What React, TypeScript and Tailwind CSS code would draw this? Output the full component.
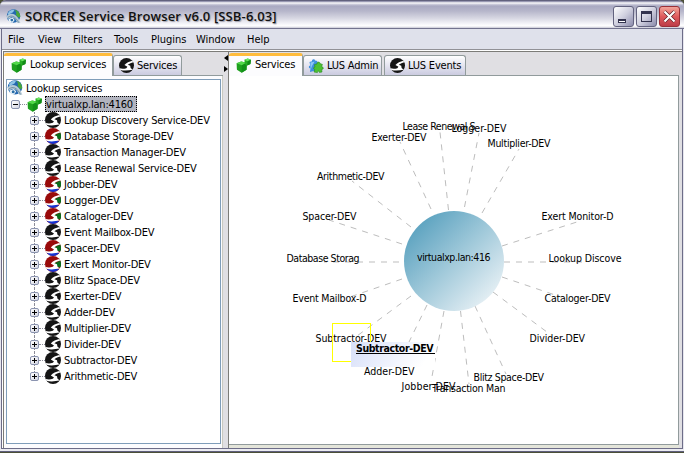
import React from "react";

const FONT = "font-['DejaVu_Sans_Condensed','Noto_Sans',sans-serif]";

function Swirl({ color = false, className = "size-4" }: { color?: boolean; className?: string }) {
  return (
    <svg viewBox="0 0 16 16" className={`shrink-0 ${className}`}>
      <circle cx="8" cy="8" r="8" fill={color ? "#990a0a" : "#151515"} />
      {color && <path d="M9 7.4L15.2 4.4A8 8 0 0 1 15.2 11.6L12.6 11Z" fill="#0a6b1c" />}
      {color && <path d="M1.8 13A8 8 0 0 0 14.2 13L8 12Z" fill="#1432d2" />}
      <path d="M14.2 3C11 3.8 8 5 5.8 7.4L9 9.4L7.8 10.8C5.5 11.6 3 11.6 .6 11L1.5 12.8C5 13.8 10.4 13.4 14.6 12.6L12.4 10.6L12 8.2L9.4 7.2C11.2 5.8 13 5 15.2 4.4Z" fill="#fff" />
    </svg>
  );
}

function Cubes({ className = "size-4" }: { className?: string }) {
  return (
    <svg viewBox="0 0 16 16" className={`shrink-0 ${className}`}>
      <path d="M.6 5.6L5.5 3.6L11.6 5L11.2 12.5L6 15.6L1 12.4Z" fill="#1fa01f" />
      <path d="M.6 5.6L5.5 3.6L11.6 5L6.2 7.6Z" fill="#52d84a" />
      <path d="M6.2 7.6L11.6 5L11.2 12.5L6 15.6Z" fill="#129018" />
      <path d="M9 1.9L12.5 .6L16 1.8L15.4 6.4L12 8L9.4 6.4Z" fill="#26ad24" />
      <path d="M9 1.9L12.5 .6L16 1.8L12.3 3.4Z" fill="#6be460" />
      <path d="M12.3 3.4L16 1.8L15.4 6.4L12 8Z" fill="#128a18" />
    </svg>
  );
}

function Globe({ className = "size-4" }: { className?: string }) {
  return (
    <svg viewBox="0 0 16 16" className={`shrink-0 ${className}`}>
      <circle cx="8" cy="7.4" r="7.2" fill="#2468b0" />
      <path d="M2 4.5C4 1 7 .6 9 1L7.5 3.4L4.5 5L3 7.4Z" fill="#8fc4e6" />
      <path d="M9.5 .8C13 1.6 15.4 5 15.2 8.6L12.8 9L10.6 6L11 3.6Z" fill="#49a63c" />
      <path d="M.4 7.6C4 3.8 9 3.8 13 9.6L15.4 14.8H12C10.5 9.8 7.5 7.6 4.5 9.2L2 10.6Z" fill="#b7cad6" />
      <path d="M2 9C6 6 10 7.6 13.4 14.4" fill="none" stroke="#5b7f95" strokeWidth=".8" />
      <path d="M2.6 10.6L7 9L9.2 11.6L7 14.6L3.4 13.6Z" fill="#edf5fa" />
      <circle cx="6.2" cy="11.8" r="1.5" fill="#2b6ea6" />
    </svg>
  );
}

function Puzzle() {
  return (
    <svg viewBox="0 0 16 16" className="size-4 shrink-0">
      <path d="M1.5 4L4 3.2C3.6 1 6.8.4 7 2.6L9.4 3L9 12L6 13L2 14L2.4 10.6C.4 10.4 .4 8 2.2 7.6Z" fill="#3f8fde" />
      <path d="M2.4 4.4L4.8 4L6.6 3.6L4 8L2.6 12Z" fill="#8cc6f5" />
      <path d="M6.4 6.6L9 6C8.6 3.6 12 3.4 12 5.6L14.4 6.4L13.6 8.8C16 9 15.8 11.6 13.6 11.4L14 14L11.4 14.4C11 12.6 9.2 12.8 9.4 14.6L6 14L6.8 11.6C5 11 5.2 9 7 9Z" fill="#4cc032" stroke="#258a1c" strokeWidth=".6" />
    </svg>
  );
}

function Expander({ open = false }: { open?: boolean }) {
  return (
    <span className="relative z-10 flex size-[9px] shrink-0 items-center justify-center rounded-[2px] border border-[#8b94b0] bg-linear-to-br from-white to-[#d3d5e2]">
      <span className="h-px w-[5px] bg-black" />
      {!open && <span className="absolute h-[5px] w-px bg-black" />}
    </span>
  );
}

const services: [string, boolean][] = [
  ["Lookup Discovery Service-DEV", false],
  ["Database Storage-DEV", true],
  ["Transaction Manager-DEV", false],
  ["Lease Renewal Service-DEV", false],
  ["Jobber-DEV", true],
  ["Logger-DEV", true],
  ["Cataloger-DEV", true],
  ["Event Mailbox-DEV", false],
  ["Spacer-DEV", true],
  ["Exert Monitor-DEV", true],
  ["Blitz Space-DEV", false],
  ["Exerter-DEV", false],
  ["Adder-DEV", false],
  ["Multiplier-DEV", false],
  ["Divider-DEV", false],
  ["Subtractor-DEV", false],
  ["Arithmetic-DEV", false],
];

function Tree() {
  return (
    <div className="flex-1 border border-[#7f9db9] bg-white text-[11px] leading-4 tracking-[-0.2px]">
      <div className="flex h-4 items-center">
        <Globe />
        <span className="ml-[3px] pt-px">Lookup services</span>
      </div>
      <div className="flex h-4 items-center pl-1">
        <Expander open />
        <span className="w-[7px] border-t border-dotted border-[#8c8c98]" />
        <Cubes className="size-[15px]" />
        <span className="ml-[3px] h-4 w-[92px] whitespace-nowrap border border-dotted border-black bg-[#b2b4bf] leading-[15px]">virtualxp.lan:4160</span>
      </div>
      <ul className="ml-[28px]">
        {services.map(([name, color], i) => (
          <li key={name} className="relative -ml-[5px] flex h-4 items-center">
            <span className={`absolute left-[4px] top-0 w-px border-l border-dotted border-[#8c8c98] ${i === services.length - 1 ? "h-2" : "h-4"}`} />
            <Expander />
            <span className="w-[6px] border-t border-dotted border-[#8c8c98]" />
            <Swirl color={color} />
            <span className="ml-[3px] whitespace-nowrap pt-px">{name}</span>
          </li>
        ))}
      </ul>
    </div>
  );
}

function Tab({ icon, label, active = false, className }: { icon: React.ReactNode; label: string; active?: boolean; className: string }) {
  return active ? (
    <div className={`relative flex h-[23px] items-center gap-[4px] rounded-t-[3px] border-t-[3px] border-r border-[#919b9c] border-t-[#ffbc3c] bg-[#fcfcfe] pb-px tracking-[-0.2px] ${className}`}>
      {icon}
      <span className="whitespace-nowrap">{label}</span>
    </div>
  ) : (
    <div className={`flex h-5 items-center gap-[3px] rounded-t-[3px] border border-b-0 border-[#919b9c] bg-linear-to-b from-white to-[#cbcbe0] tracking-[-0.2px] ${className}`}>
      {icon}
      <span className="whitespace-nowrap pt-[2px]">{label}</span>
    </div>
  );
}

type Label = [string, number, number, number];
const labels: Label[] = [
  ["Lease Renewal S", 402.5, 130, 73],
  ["Logger-DEV", 451.5, 132, 55],
  ["Exerter-DEV", 371.5, 141, 55],
  ["Multiplier-DEV", 487.5, 147, 63],
  ["Arithmetic-DEV", 317, 180, 67.5],
  ["Spacer-DEV", 302.5, 220, 54],
  ["Exert Monitor-D", 541.5, 220, 72],
  ["Database Storag", 286.5, 262, 73],
  ["Lookup Discove", 548.5, 262, 73],
  ["Event Mailbox-D", 292.5, 302, 74],
  ["Cataloger-DEV", 544.5, 302, 66],
  ["Subtractor-DEV", 315.5, 342, 71],
  ["Divider-DEV", 529.5, 342, 55.5],
  ["Adder-DEV", 364, 375, 50.5],
  ["Jobber-DEV", 401.5, 390, 54],
  ["Blitz Space-DEV", 473.5, 381, 70.5],
  ["Transaction Man", 432, 392, 73.5],
];

const links = [
  [448.5, 210, 440, 132], [464.5, 207, 479, 133], [431, 209, 400, 142], [482, 213, 519, 149],
  [411, 227, 352, 181], [402, 244, 329, 220], [399, 262, 324, 262], [502, 246, 580, 221],
  [504, 262, 585, 262], [502, 277, 561, 297], [402, 279, 347, 298], [411, 296, 357, 336],
  [493, 292, 551, 335], [427, 305, 409, 342], [444, 311, 431, 382], [475, 306, 506, 374],
  [460.5, 311, 469, 384],
];

function Network() {
  return (
    <svg viewBox="229 76 449 368" className="h-[368px] w-[449px]" fontSize="10.5">
      <defs>
        <linearGradient id="hub" x1="0" y1="0" x2="1" y2="1">
          <stop offset=".1" stopColor="#57a0be" />
          <stop offset=".9" stopColor="#eaf2f6" />
        </linearGradient>
        <linearGradient id="tip" x1="0" y1="0" x2="1" y2="0.2">
          <stop offset="0" stopColor="#d8e0f9" />
          <stop offset="1" stopColor="#fff" />
        </linearGradient>
      </defs>
      <g stroke="#bdbdbd" strokeDasharray="6 6">
        {links.map(([x1, y1, x2, y2]) => (
          <line key={`${x2}-${y2}`} x1={x1} y1={y1} x2={x2} y2={y2} />
        ))}
      </g>
      <circle cx="454" cy="261" r="50" fill="url(#hub)" />
      <text x="417" y="261" textLength="73.5">virtualxp.lan:416</text>
      {labels.map(([text, x, y, w]) => (
        <text key={text} x={x} y={y} textLength={w}>{text}</text>
      ))}
      <rect x="332.5" y="323.5" width="38" height="38" fill="none" stroke="#ffff00" />
      <rect x="351" y="342" width="84" height="25" fill="url(#tip)" />
      <text x="356" y="352" textLength="77.5" fontWeight="bold">Subtractor-DEV</text>
      <rect x="356" y="353" width="79" height="1" />
    </svg>
  );
}

export default function App() {
  return (
    <div className={`flex h-[453px] w-[684px] flex-col overflow-hidden bg-[#4b5038] text-[11px] text-black ${FONT}`}>
      <div className="flex h-[452px] flex-col rounded-t-[6px] border-b border-[#5f5f7c] bg-[#e0dfe3]">
        <header className="flex h-[29px] shrink-0 items-center rounded-t-[6px] border-t border-b border-t-[#62627e] border-b-[#73738f] bg-[linear-gradient(#77779a_0px,#ffffff_2px,#d3d3e0_3px,#a9a9c2_5px,#b6b6ca_10px,#d6d6e2_17px,#f6f6fa_23px,#ffffff_25px,#c7c7d5_27px)] pl-[6px] pr-1">
          <Globe className="mt-1 size-[15px]" />
          <h1 className="ml-1 mt-[5px] flex-1 whitespace-nowrap font-['Open_Sans',sans-serif] text-[13px] font-semibold tracking-[0.13px] text-[#111] [text-shadow:1px_1px_1px_#a0a0ac]">SORCER Service Browser v6.0 [SSB-6.03]</h1>
          <div className="mt-1 flex gap-[2px]">
            <button className="flex size-[21px] items-end rounded-[3px] border border-[#63637f] bg-linear-to-br from-white via-[#d0d0df] to-[#8c8cac] pb-[3px] pl-1">
              <span className="h-[4px] w-2 border border-t-2 border-[#33334e] bg-white" />
            </button>
            <button className="flex size-[21px] items-center justify-center rounded-[3px] border border-[#63637f] bg-linear-to-br from-white via-[#d0d0df] to-[#8c8cac]">
              <span className="h-[11px] w-[11px] border border-t-[3px] border-[#33334e]" />
            </button>
            <button className="flex size-[21px] items-center justify-center rounded-[3px] border border-[#9a3038] bg-linear-to-b from-[#f0a39a] via-[#e05a5c] to-[#bd3c48]">
              <svg viewBox="0 0 13 13" className="size-[13px]">
                <path d="M1.5 1.5L11.5 11.5M11.5 1.5L1.5 11.5" stroke="#5a1c22" strokeWidth="3.4" />
                <path d="M1.5 1.5L11.5 11.5M11.5 1.5L1.5 11.5" stroke="#fff" strokeWidth="2.2" />
              </svg>
            </button>
          </div>
        </header>
        <div className="flex min-h-0 flex-1 flex-col border-x border-[#e6e6ee]">
          <div className="flex min-h-0 flex-1 flex-col border-x border-b border-[#6d6d88]">
            <nav className="flex h-[21px] shrink-0 items-center border-b border-[#919196] bg-[#dfe1eb] pl-[6px] pt-[2px]">
              <span className="w-[30px]">File</span>
              <span className="w-[35px]">View</span>
              <span className="w-[41px]">Filters</span>
              <span className="w-[37px]">Tools</span>
              <span className="w-[45px]">Plugins</span>
              <span className="w-[51px]">Window</span>
              <span>Help</span>
            </nav>
            <main className="flex min-h-0 flex-1 border-t border-l border-white">
              <section className="flex w-[220px] flex-col border-t border-l border-[#7c7c78] bg-[#e0dfe3] pt-px">
                <div className="flex h-[23px] shrink-0 items-end border-b border-[#919b9c]">
                  <Tab active icon={<Cubes className="size-[15px]" />} label="Lookup services" className="-mb-px w-[109px] pl-[7px]" />
                  <Tab icon={<Swirl className="size-[15px]" />} label="Services" className="w-[69px] pl-[5px]" />
                </div>
                <div className="flex flex-1 flex-col border-r border-[#c9c9bf] bg-[#fcfcfe] pb-[4px] pl-[2px] pr-px pt-[3px]">
                  <Tree />
                </div>
              </section>
              <div className="flex w-[5px] shrink-0 flex-col items-end border-t border-[#7c7c78] pt-[3px]">
                <span className="size-0 border-y-[3px] border-r-[4px] border-y-transparent border-r-black" />
                <span className="mt-[5px] size-0 border-y-[3px] border-l-[4px] border-y-transparent border-l-black" />
              </div>
              <section className="flex min-w-0 flex-1 flex-col border-t border-l border-[#7c7c78] pr-[3px] pt-px">
                <div className="flex h-[23px] shrink-0 items-end border-b border-[#919b9c]">
                  <Tab active icon={<Cubes className="size-[15px]" />} label="Services" className="-mb-px w-[74px] pl-[7px]" />
                  <Tab icon={<Puzzle />} label="LUS Admin" className="w-[79px] pl-1" />
                  <Tab icon={<Swirl className="size-[15px]" />} label="LUS Events" className="ml-[2px] w-[82px] pl-[5px]" />
                </div>
                <div className="flex-1 overflow-hidden border-r border-b border-[#919b9c] bg-white">
                  <Network />
                </div>
                <div className="h-[3px] shrink-0 bg-[#e4e5da]" />
              </section>
            </main>
          </div>
        </div>
        <div className="h-[2px] shrink-0 bg-[#ececf2]" />
      </div>
    </div>
  );
}
